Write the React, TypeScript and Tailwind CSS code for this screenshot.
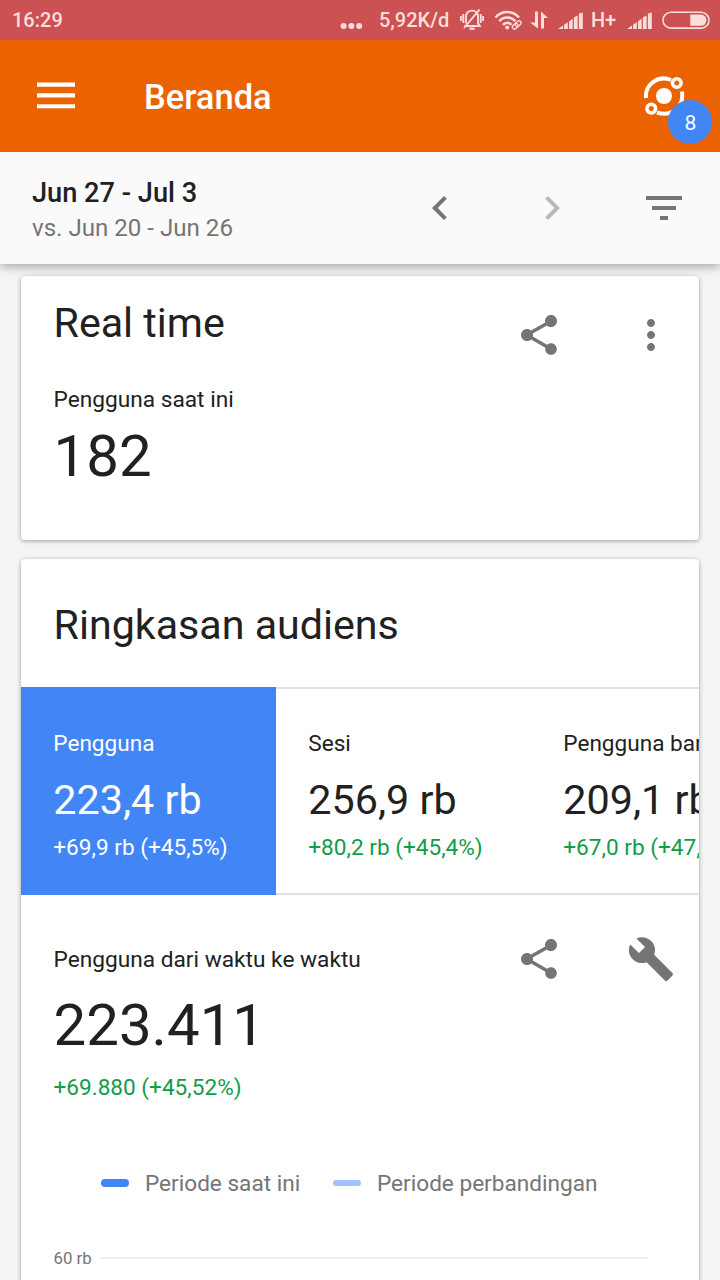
import type { ReactNode } from "react";
import { MdBuild, MdChevronLeft, MdChevronRight, MdFilterList, MdMoreVert, MdShare } from "react-icons/md";

function SignalBars() {
  return (
    <svg width="26" height="18" viewBox="0 0 26 18" fill="currentColor">
      <path d="M0 17 L5 13.500 V17Z" />
      <path d="M6.100 17V12.800L9.800 10.200V17ZM11 17V9.400L14.700 6.800V17ZM15.900 17V5.200L19.600 3.800V17ZM20.900 17V1.500L24.800 0.500V17Z" />
    </svg>
  );
}

function StatusBar() {
  return (
    <div className="flex h-10 shrink-0 items-center bg-[#cb5152] pl-[12px] text-[20px] leading-10 font-medium text-[#fbdedc]">
      <span className="w-[328px]">16:29</span>
      <svg className="mt-[11px] w-[39px]" width="39" height="8" viewBox="0 0 39 8" fill="currentColor">
        <circle cx="3.600" cy="4" r="3" />
        <circle cx="11.400" cy="4" r="3" />
        <circle cx="19.200" cy="4" r="3" />
      </svg>
      <span className="w-[81px]">5,92K/d</span>
      <svg width="24" height="24" viewBox="0 0 24 24" fill="none" stroke="currentColor" strokeWidth="1.900">
        <path d="M6 15.500V8.500C6 5 8.500 2.600 12 2.600c3.500 0 6 2.400 6 5.900v7M4.200 18h15.600l-2-3M4 20L19.500 1.700" />
        <path d="M3.300 6v9M0.900 8v5M20.700 6v9M23.100 8v5" />
        <path d="M9.500 20.700h5" strokeWidth="2.200" />
      </svg>
      <svg className="ml-[10px]" width="30" height="24" viewBox="0 0 30 24" fill="none" stroke="currentColor" strokeWidth="2.600">
        <path d="M1.500 9.500C8 2.200 18.500 2.200 25 9.500M5.200 13.200C9.700 8.200 16.800 8.200 21.300 13.200M9 16.800C11.400 14 15 14 17.300 16.800" />
        <circle cx="13.200" cy="19.400" r="2" fill="currentColor" stroke="none" />
        <g transform="rotate(-42 22.500 17)" strokeWidth="1.300">
          <rect x="17.500" y="15" width="6.400" height="4.200" rx="2.100" />
          <rect x="21.400" y="15" width="6.400" height="4.200" rx="2.100" />
        </g>
      </svg>
      <svg className="ml-[6px]" width="18" height="20" viewBox="0 0 18 20" fill="currentColor">
        <path d="M5 1.500H8V18.500L0 12.500H5ZM11 18.500V1.500L18 8H14V18.500Z" />
      </svg>
      <span className="ml-[10px] mt-[2px]"><SignalBars /></span>
      <span className="ml-[7px] w-[30px] tracking-[-0.300px]">H+</span>
      <span className="ml-[6px] mt-[2px]"><SignalBars /></span>
      <svg className="ml-[8px]" width="50" height="20" viewBox="0 0 50 20">
        <rect x="2" y="2.300" width="46" height="15.800" rx="7.900" fill="none" stroke="currentColor" strokeWidth="1.600" />
        <path d="M29.300 4.600H39.800a5.600 5.600 0 0 1 0 11.200H29.300Z" fill="currentColor" />
      </svg>
    </div>
  );
}

function AppBar() {
  return (
    <header className="relative z-20 flex h-28 shrink-0 items-center bg-[#eb6300] pl-[37px] text-white">
      <svg width="38" height="28" viewBox="0 0 38 28" fill="currentColor">
        <path d="M0 0.500H38V4.700H0ZM0 11.300H38V15.400H0ZM0 22.200H38V26.300H0Z" />
      </svg>
      <h1 className="ml-[69px] mt-[2px] flex-1 text-[34.500px] leading-10 font-medium">Beranda</h1>
      <div className="relative mr-[32px] size-12">
        <svg width="48" height="48" viewBox="0 0 48 48" fill="none" stroke="currentColor">
          <path d="M6 26C4.500 13 18 2.500 31 8M42 19.500C44.500 34 32 45.500 17 40.500" strokeWidth="4" />
          <circle cx="24" cy="24" r="8" fill="currentColor" stroke="none" />
          <circle cx="36.800" cy="11" r="4.300" fill="#eb6300" strokeWidth="3.600" />
          <circle cx="11.300" cy="36.600" r="4.300" fill="#eb6300" strokeWidth="3.600" />
        </svg>
        <span className="absolute top-7 left-[28.300px] flex size-11 items-center justify-center rounded-full bg-[#4285f4] pt-[3px] text-[21px]">8</span>
      </div>
    </header>
  );
}

function DateBar() {
  return (
    <div className="relative z-10 flex h-28 shrink-0 bg-[#fafafa] pl-8 text-[#757575] shadow-[0_2px_10px_rgba(0,0,0,0.36)]">
      <div className="w-[384px] pt-[23px]">
        <div className="text-[27.200px] leading-9 font-medium text-[#212121]">Jun 27 - Jul 3</div>
        <div className="text-[24.100px] leading-[34px]">vs. Jun 20 - Jun 26</div>
      </div>
      <div className="flex flex-1 items-center justify-between pr-8">
        <MdChevronLeft size={48} />
        <MdChevronRight size={48} className="text-[#b9b9b9]" />
        <MdFilterList size={48} />
      </div>
    </div>
  );
}

function Actions({ children }: { children: ReactNode }) {
  return <div className="flex w-[160px] shrink-0 justify-between text-[#757575]">{children}</div>;
}

const metrics = [
  { label: "Pengguna", value: "223,4 rb", change: "+69,9 rb (+45,5%)", active: true },
  { label: "Sesi", value: "256,9 rb", change: "+80,2 rb (+45,4%)", active: false },
  { label: "Pengguna baru", value: "209,1 rb", change: "+67,0 rb (+47,2%)", active: false },
];

function MetricTile({ label, value, change, active }: (typeof metrics)[number]) {
  return (
    <div
      className={
        "h-[208px] w-[255px] shrink-0 border-y-2 pt-[37px] pl-[32.300px] whitespace-nowrap " +
        (active ? "border-[#4285f4] bg-[#4285f4] text-white" : "border-[#e0e0e0] text-[#212121]")
      }
    >
      <div className="text-[22.600px] leading-9">{label}</div>
      <div className="mt-[11px] text-[41.300px] leading-[54px]">{value}</div>
      <div className={"mt-[5px] text-[22.600px] leading-8 " + (active ? "" : "text-[#0f9d4a]")}>{change}</div>
    </div>
  );
}

export default function App() {
  return (
    <div className="flex h-[1280px] w-[720px] flex-col overflow-hidden bg-[#f4f4f4] font-['Roboto',sans-serif]">
      <StatusBar />
      <AppBar />
      <DateBar />
      <main className="flex flex-1 flex-col gap-[19px] overflow-hidden px-[21px] pt-[11.500px]">
        <section className="h-[264.500px] shrink-0 rounded bg-white pl-[32.500px] text-[#212121] shadow-[0_1px_4px_rgba(0,0,0,0.36)]">
          <div className="flex justify-between pt-[35.500px] pr-[24.500px]">
            <h2 className="mt-[-15px] text-[41.200px] leading-[54px]">Real time</h2>
            <Actions>
              <MdShare size={48} />
              <MdMoreVert size={48} />
            </Actions>
          </div>
          <div className="mt-[23px] text-[22.700px] leading-9">Pengguna saat ini</div>
          <div className="text-[58.200px] leading-[76px]">182</div>
        </section>
        <section className="h-[760px] shrink-0 overflow-hidden rounded bg-white text-[#212121] shadow-[0_1px_4px_rgba(0,0,0,0.36)]">
          <h2 className="h-[128px] pl-[32.500px] text-[41.200px] leading-[133px]">Ringkasan audiens</h2>
          <div className="flex overflow-hidden">
            {metrics.map((m) => (
              <MetricTile key={m.label} {...m} />
            ))}
          </div>
          <div className="pl-[32.500px]">
            <div className="flex justify-between pt-[40px] pr-[24.500px]">
              <div className="text-[22.700px] leading-[50px]">Pengguna dari waktu ke waktu</div>
              <Actions>
                <MdShare size={48} />
                <MdBuild size={48} />
              </Actions>
            </div>
            <div className="mt-[2px] text-[58.200px] leading-[76px]">223.411</div>
            <div className="mt-[7px] text-[22.600px] leading-9 text-[#0f9d4a]">+69.880 (+45,52%)</div>
            <div className="mt-[60px] flex items-center pl-[47.500px] text-[22.600px] leading-9 text-[#757575]">
              <span className="mt-[-2px] h-2 w-7 rounded-full bg-[#4285f4]" />
              <span className="ml-[16px] w-[188px]">Periode saat ini</span>
              <span className="mt-[-2px] h-1.5 w-7 rounded-full bg-[#a1c2fa]" />
              <span className="ml-[16px]">Periode perbandingan</span>
            </div>
            <div className="mt-[44px] flex items-center text-[16.800px] leading-[24px] text-[#757575]">
              <span className="w-[46.500px]">60 rb</span>
              <span className="h-[2px] w-[547px] bg-[#eeeeee]" />
            </div>
          </div>
        </section>
      </main>
    </div>
  );
}
